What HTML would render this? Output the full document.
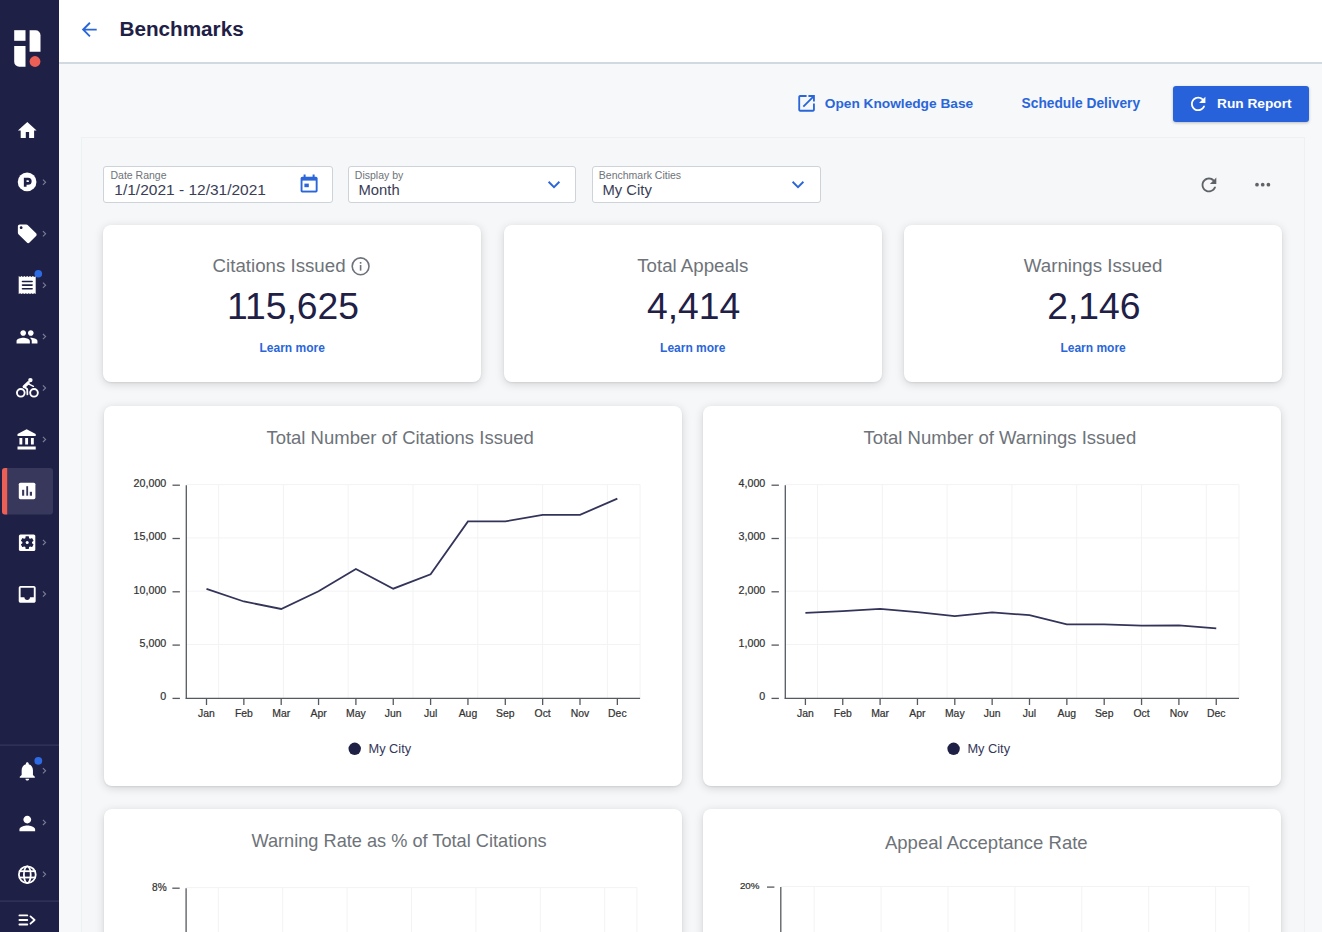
<!DOCTYPE html>
<html><head><meta charset="utf-8">
<style>
*{box-sizing:border-box;margin:0;padding:0}
html,body{width:1322px;height:932px;overflow:hidden;background:#f6f8f9;font-family:"Liberation Sans",sans-serif;position:relative}
.abs{position:absolute}
#side{position:absolute;left:0;top:0;width:58.6px;height:932px;background:#1f2046}
#hdr{position:absolute;left:59px;top:0;width:1263px;height:64px;background:#fff;border-bottom:2px solid #d3dadf}
#panel{position:absolute;left:80.6px;top:137px;width:1224px;height:800px;background:#f5f7f8;border:1px solid #eef1f3;border-bottom:none}
.t{position:absolute;white-space:nowrap;line-height:1}
.card{position:absolute;background:#fff;border-radius:8px;box-shadow:0 1px 2px rgba(0,0,0,.07),0 2px 10px rgba(0,0,0,.15)}
.inp{position:absolute;background:#fff;border:1px solid #cdd3d8;border-radius:3px}
</style></head><body>
<div id="side"></div>
<div id="hdr"></div>
<div id="panel"></div>
<svg class="abs" style="left:0;top:0" width="59" height="932" viewBox="0 0 59 932"><rect x="14.2" y="30.2" width="11.3" height="10.6" fill="#fff"/><path d="M14.2 45.9h11.3v20.9h-6.3a5 5 0 0 1-5-5z" fill="#fff"/><path d="M29.6 30.2h5.9a5 5 0 0 1 5 5v16.6h-10.9z" fill="#fff"/><circle cx="35" cy="61.5" r="5.4" fill="#ec5f57"/><rect x="2" y="468" width="51" height="46.6" rx="3" fill="#37385b"/><path d="M7.2 468v46.6h-2.2a3 3 0 0 1-3-3v-40.6a3 3 0 0 1 3-3z" fill="#ec5f57"/><rect x="0" y="744.6" width="59" height="1" fill="#3a3c60"/><rect x="0" y="900.6" width="59" height="1" fill="#3a3c60"/><path d="M27.3 122L36.6 130.6H34.1V138H29.1V132.1H25.8V138H20.7V130.6H17.9Z" fill="#fff"/><circle cx="27.1" cy="181.9" r="9.35" fill="#fff"/><path d="M25.2 186.7V179H28.1A2.2 2.2 0 0 1 28.1 183.4H25.2" fill="none" stroke="#1f2046" stroke-width="2.7"/><g transform="translate(16,222.5) scale(0.9375)" fill="#fff" ><path d="M21.41 11.58l-9-9C12.05 2.22 11.55 2 11 2H4c-1.1 0-2 .9-2 2v7c0 .55.22 1.05.59 1.42l9 9c.36.36.86.58 1.41.58.55 0 1.05-.22 1.41-.59l7-7c.37-.36.59-.86.59-1.41 0-.55-.23-1.06-.59-1.42zM5.5 7C4.67 7 4 6.33 4 5.5S4.67 4 5.5 4 7 4.67 7 5.5 6.33 7 5.5 7z"/></g><path d="M18.7 294 V276.1 L20.12 276.9 L21.53 276.1 L22.95 276.9 L24.37 276.1 L25.78 276.9 L27.20 276.1 L28.62 276.9 L30.03 276.1 L31.45 276.9 L32.87 276.1 L34.28 276.9 L35.70 276.1 V294 L34.28 293.2 L32.87 294 L31.45 293.2 L30.03 294 L28.62 293.2 L27.20 294 L25.78 293.2 L24.37 294 L22.95 293.2 L21.53 294 L20.12 293.2 L18.70 294 Z" fill="#fff"/><line x1="22.5" y1="281.5" x2="32.1" y2="281.5" stroke="#1f2046" stroke-width="1.6" stroke-linecap="round"/><line x1="22.5" y1="285.1" x2="32.1" y2="285.1" stroke="#1f2046" stroke-width="1.6" stroke-linecap="round"/><line x1="22.5" y1="288.7" x2="32.1" y2="288.7" stroke="#1f2046" stroke-width="1.6" stroke-linecap="round"/><circle cx="38.3" cy="273.7" r="3.8" fill="#2d6be4"/><g transform="translate(15.6,325.4) scale(0.9500000000000001)" fill="#fff" ><path d="M16 11c1.66 0 2.99-1.34 2.99-3S17.66 5 16 5c-1.66 0-3 1.34-3 3s1.34 3 3 3zm-8 0c1.66 0 2.99-1.34 2.99-3S9.66 5 8 5C6.34 5 5 6.34 5 8s1.34 3 3 3zm0 2c-2.33 0-7 1.17-7 3.5V19h14v-2.5c0-2.33-4.67-3.5-7-3.5zm8 0c-.29 0-.62.02-.97.05 1.16.84 1.97 1.97 1.97 3.45V19h6v-2.5c0-2.33-4.67-3.5-7-3.5z"/></g><g fill="none" stroke="#fff" stroke-width="1.9"><circle cx="20.8" cy="392.8" r="3.85"/><circle cx="34" cy="392.8" r="3.85"/></g><circle cx="30.4" cy="380.1" r="2.2" fill="#fff"/><g fill="none" stroke="#fff" stroke-linecap="round" stroke-linejoin="round"><path d="M28.2 382.8L24.2 386.6" stroke-width="3.2"/><path d="M28 383.6L33.4 386.3" stroke-width="1.5"/><path d="M24.4 386.8L27.2 389.2L27.4 394.4" stroke-width="1.8"/></g><g transform="translate(15.6,428.3) scale(0.9583333333333334)" fill="#fff" ><path d="M4 10v7h3v-7H4zm6 0v7h3v-7h-3zM2 22h19v-3H2v3zm14-12v7h3v-7h-3zm-4.5-9L2 6v2h19V6l-9.5-5z"/></g><rect x="18.8" y="482.7" width="16.6" height="16.5" rx="1.6" fill="#fff"/><rect x="22.1" y="489.8" width="2.1" height="5.9" fill="#37385b"/><rect x="26.3" y="486.2" width="1.8" height="9.5" fill="#37385b"/><rect x="29.8" y="491.8" width="2.2" height="3.9" fill="#37385b"/><rect x="18.9" y="534.5" width="16.4" height="16.6" rx="1.6" fill="#fff"/><g transform="translate(19.16,534.56) scale(0.6708333333333334)" fill="#1f2046" ><path d="M19.14 12.94c.04-.3.06-.61.06-.94 0-.32-.02-.64-.07-.94l2.03-1.58c.18-.14.23-.41.12-.61l-1.92-3.32c-.12-.22-.37-.29-.59-.22l-2.39.96c-.5-.38-1.03-.7-1.62-.94l-.36-2.54c-.04-.24-.24-.41-.48-.41h-3.84c-.24 0-.43.17-.47.41l-.36 2.54c-.59.24-1.13.57-1.62.94l-2.39-.96c-.22-.08-.47 0-.59.22L2.74 8.87c-.12.21-.08.47.12.61l2.03 1.58c-.05.3-.09.63-.09.94s.02.64.07.94l-2.03 1.58c-.18.14-.23.41-.12.61l1.92 3.32c.12.22.37.29.59.22l2.39-.96c.5.38 1.03.7 1.62.94l.36 2.54c.05.24.24.41.48.41h3.84c.24 0 .44-.17.47-.41l.36-2.54c.59-.24 1.13-.56 1.62-.94l2.39.96c.22.08.47 0 .59-.22l1.92-3.32c.12-.22.07-.47-.12-.61l-2.01-1.58z"/></g><circle cx="27.2" cy="542.6" r="1.5" fill="#fff"/><g transform="translate(15.9,583.1) scale(0.9416666666666668)" fill="#fff" ><path d="M19 3H4.99c-1.11 0-1.98.89-1.98 2L3 19c0 1.1.88 2 1.99 2H19c1.1 0 2-.9 2-2V5c0-1.11-.9-2-2-2zm0 12h-4c0 1.66-1.35 3-3 3s-3-1.34-3-3H4.99V5H19v10z"/></g><g transform="translate(16.0,759.9) scale(0.9416666666666668)" fill="#fff" ><path d="M12 22c1.1 0 2-.9 2-2h-4c0 1.1.89 2 2 2zm6-6v-5c0-3.07-1.64-5.64-4.5-6.32V4c0-.83-.67-1.5-1.5-1.5s-1.5.67-1.5 1.5v.68C7.63 5.36 6 7.92 6 11v5l-2 2v1h16v-1l-2-2z"/></g><circle cx="38.3" cy="760.8" r="3.9" fill="#2d6be4"/><g transform="translate(15.54,811.74) scale(0.9791666666666666)" fill="#fff" ><path d="M12 12c2.21 0 4-1.79 4-4s-1.79-4-4-4-4 1.79-4 4 1.79 4 4 4zm0 2c-2.67 0-8 1.34-8 4v2h16v-2c0-2.66-5.33-4-8-4z"/></g><g fill="none" stroke="#fff" stroke-width="1.8"><circle cx="27.3" cy="874.7" r="8.4"/><ellipse cx="27.3" cy="874.7" rx="3.4" ry="8.4"/><line x1="18.9" y1="871.2" x2="35.7" y2="871.2"/><line x1="18.9" y1="877.5" x2="35.7" y2="877.5"/></g><g stroke="#fff" stroke-width="1.8" stroke-linecap="round" fill="none"><path d="M19.4 915.4H27.3M19.4 920H27.3M19.4 924.5H27.3"/><path d="M30.5 916.4L34.6 920L30.5 923.7" stroke-linejoin="round"/></g><path d="M42.9 179.6l2.7 2.6-2.7 2.6" fill="none" stroke="#7c7e99" stroke-width="1.1"/><path d="M42.9 231.2l2.7 2.6-2.7 2.6" fill="none" stroke="#7c7e99" stroke-width="1.1"/><path d="M42.9 282.6l2.7 2.6-2.7 2.6" fill="none" stroke="#7c7e99" stroke-width="1.1"/><path d="M42.9 334.0l2.7 2.6-2.7 2.6" fill="none" stroke="#7c7e99" stroke-width="1.1"/><path d="M42.9 385.4l2.7 2.6-2.7 2.6" fill="none" stroke="#7c7e99" stroke-width="1.1"/><path d="M42.9 436.8l2.7 2.6-2.7 2.6" fill="none" stroke="#7c7e99" stroke-width="1.1"/><path d="M42.9 539.8l2.7 2.6-2.7 2.6" fill="none" stroke="#7c7e99" stroke-width="1.1"/><path d="M42.9 591.4l2.7 2.6-2.7 2.6" fill="none" stroke="#7c7e99" stroke-width="1.1"/><path d="M42.9 768.2l2.7 2.6-2.7 2.6" fill="none" stroke="#7c7e99" stroke-width="1.1"/><path d="M42.9 819.8l2.7 2.6-2.7 2.6" fill="none" stroke="#7c7e99" stroke-width="1.1"/><path d="M42.9 871.7l2.7 2.6-2.7 2.6" fill="none" stroke="#7c7e99" stroke-width="1.1"/></svg>
<svg class="abs" style="left:81px;top:21px" width="18" height="18" viewBox="0 0 18 18"><g transform="translate(-2.9,-2.6) scale(0.93)" fill="#2a66d9"><path d="M20 11H7.83l5.59-5.59L12 4l-8 8 8 8 1.41-1.41L7.83 13H20v-2z"/></g></svg>
<div class="t" style="left:119.50px;top:18.78px;font-size:20.7px;color:#1f2046;font-weight:700;">Benchmarks</div>
<svg class="abs" style="left:797px;top:94px" width="20" height="20" viewBox="0 0 20 20"><g transform="translate(-1.46,-1.66) scale(0.92)" fill="#2a66d9"><path d="M19 19H5V5h7V3H5c-1.11 0-2 .9-2 2v14c0 1.1.89 2 2 2h14c1.1 0 2-.9 2-2v-7h-2v7zM14 3v2h3.59l-9.83 9.83 1.41 1.41L19 6.41V10h2V3h-7z"/></g></svg>
<div class="t" style="left:824.80px;top:96.80px;font-size:13.7px;color:#2a66d9;font-weight:700;">Open Knowledge Base</div>
<div class="t" style="left:1021.60px;top:96.96px;font-size:13.75px;color:#2a66d9;font-weight:700;">Schedule Delivery</div>
<div class="abs" style="left:1173px;top:85.5px;width:136px;height:36.5px;background:#2862db;border-radius:3px;box-shadow:0 1px 3px rgba(0,0,0,.25)"></div>
<svg class="abs" style="left:1188px;top:94px" width="20" height="20" viewBox="0 0 20 20"><g transform="translate(-0.6,-0.9) scale(0.9)" fill="#fff"><path d="M17.65 6.35C16.2 4.9 14.21 4 12 4c-4.42 0-7.99 3.58-7.99 8s3.57 8 7.99 8c3.73 0 6.84-2.55 7.730-6h-2.08c-.82 2.33-3.04 4-5.65 4-3.31 0-6-2.69-6-6s2.69-6 6-6c1.66 0 3.14.69 4.22 1.78L13 11h7V4l-2.35 2.35z"/></g></svg>
<div class="t" style="left:1217.00px;top:97.00px;font-size:13.7px;color:#fff;font-weight:700;">Run Report</div>
<div class="inp" style="left:103px;top:166px;width:229.5px;height:37px"></div>
<div class="t" style="left:110.50px;top:170.21px;font-size:10.5px;color:#6e7379;">Date Range</div>
<div class="t" style="left:114.30px;top:182.48px;font-size:15.5px;color:#3a3d55;">1/1/2021 - 12/31/2021</div>
<svg class="abs" style="left:298px;top:173px" width="22" height="22" viewBox="0 0 22 22"><g fill="#2a66d9"><rect x="2.6" y="3.8" width="17" height="15.6" rx="1.6"/><rect x="4.5" y="7.6" width="13.2" height="10" fill="#fff"/><rect x="5.6" y="1.5" width="2" height="3.5"/><rect x="14.6" y="1.5" width="2" height="3.5"/><rect x="6.4" y="10.6" width="4.4" height="3.6"/></g></svg>
<div class="inp" style="left:347.5px;top:166px;width:228px;height:37px"></div>
<div class="t" style="left:354.80px;top:170.21px;font-size:10.5px;color:#6e7379;">Display by</div>
<div class="t" style="left:358.50px;top:182.97px;font-size:14.8px;color:#3a3d55;">Month</div>
<svg class="abs" style="left:546.6px;top:179.5px" width="14" height="10" viewBox="0 0 14 10"><path d="M1.6 1.8l5.4 5.3 5.4-5.3" fill="none" stroke="#2a66d9" stroke-width="1.9"/></svg>
<div class="inp" style="left:592px;top:166px;width:228.5px;height:37px"></div>
<div class="t" style="left:598.80px;top:170.21px;font-size:10.5px;color:#6e7379;">Benchmark Cities</div>
<div class="t" style="left:602.50px;top:182.97px;font-size:14.8px;color:#3a3d55;">My City</div>
<svg class="abs" style="left:790.6px;top:179.5px" width="14" height="10" viewBox="0 0 14 10"><path d="M1.6 1.8l5.4 5.3 5.4-5.3" fill="none" stroke="#2a66d9" stroke-width="1.9"/></svg>
<svg class="abs" style="left:1199px;top:175px" width="20" height="20" viewBox="0 0 20 20"><g transform="translate(-1.08,-1.08) scale(0.92)" fill="#5f6368"><path d="M17.65 6.35C16.2 4.9 14.21 4 12 4c-4.42 0-7.990 3.58-7.99 8s3.57 8 7.99 8c3.73 0 6.84-2.55 7.73-6h-2.08c-.82 2.33-3.04 4-5.65 4-3.31 0-6-2.69-6-6s2.69-6 6-6c1.66 0 3.14.69 4.22 1.78L13 11h7V4l-2.35 2.35z"/></g></svg>
<svg class="abs" style="left:1250px;top:178px" width="26" height="14" viewBox="0 0 26 14"><g fill="#5f6368"><circle cx="7" cy="6.7" r="1.85"/><circle cx="12.7" cy="6.7" r="1.85"/><circle cx="18.4" cy="6.7" r="1.85"/></g></svg>
<div class="card" style="left:103px;top:224.8px;width:378.4px;height:157.4px"></div>
<div class="t" style="left:212.60px;top:256.57px;font-size:18.7px;color:#6e7379;">Citations Issued</div>
<svg class="abs" style="left:350px;top:256px" width="21" height="21" viewBox="0 0 21 21"><circle cx="10.6" cy="10.3" r="8.4" fill="none" stroke="#6e7379" stroke-width="1.6"/><rect x="9.8" y="9" width="1.6" height="5.6" fill="#6e7379"/><rect x="9.8" y="6" width="1.6" height="1.7" fill="#6e7379"/></svg>
<div class="t" style="left:-7.00px;width:600px;text-align:center;top:288.43px;font-size:37.3px;color:#1f2046;">115,625</div>
<div class="t" style="left:-7.80px;width:600px;text-align:center;top:342.14px;font-size:12px;color:#2a66d9;font-weight:700;">Learn more</div>
<div class="card" style="left:503.6px;top:224.8px;width:378.4px;height:157.4px"></div>
<div class="t" style="left:392.80px;width:600px;text-align:center;top:256.57px;font-size:18.7px;color:#6e7379;">Total Appeals</div>
<div class="t" style="left:393.60px;width:600px;text-align:center;top:288.43px;font-size:37.3px;color:#1f2046;">4,414</div>
<div class="t" style="left:392.80px;width:600px;text-align:center;top:342.14px;font-size:12px;color:#2a66d9;font-weight:700;">Learn more</div>
<div class="card" style="left:903.9px;top:224.8px;width:378.4px;height:157.4px"></div>
<div class="t" style="left:793.10px;width:600px;text-align:center;top:256.57px;font-size:18.7px;color:#6e7379;">Warnings Issued</div>
<div class="t" style="left:793.90px;width:600px;text-align:center;top:288.43px;font-size:37.3px;color:#1f2046;">2,146</div>
<div class="t" style="left:793.10px;width:600px;text-align:center;top:342.14px;font-size:12px;color:#2a66d9;font-weight:700;">Learn more</div>
<div class="card" style="left:103.9px;top:405.7px;width:577.9px;height:380.2px"></div>
<div class="t" style="left:100.10px;width:600px;text-align:center;top:428.84px;font-size:18.5px;color:#6e7379;">Total Number of Citations Issued</div>
<svg class="abs" style="left:103.9px;top:405.7px;overflow:visible" width="578" height="381" font-family="Liberation Sans"><line x1="82.30" y1="78.60" x2="536.10" y2="78.60" stroke="#f3f3f3" stroke-width="1"/><line x1="82.30" y1="131.90" x2="536.10" y2="131.90" stroke="#f3f3f3" stroke-width="1"/><line x1="82.30" y1="185.20" x2="536.10" y2="185.20" stroke="#f3f3f3" stroke-width="1"/><line x1="82.30" y1="238.50" x2="536.10" y2="238.50" stroke="#f3f3f3" stroke-width="1"/><line x1="114.60" y1="78.60" x2="114.60" y2="292.40" stroke="#f3f3f3" stroke-width="1"/><line x1="179.40" y1="78.60" x2="179.40" y2="292.40" stroke="#f3f3f3" stroke-width="1"/><line x1="244.20" y1="78.60" x2="244.20" y2="292.40" stroke="#f3f3f3" stroke-width="1"/><line x1="309.00" y1="78.60" x2="309.00" y2="292.40" stroke="#f3f3f3" stroke-width="1"/><line x1="373.80" y1="78.60" x2="373.80" y2="292.40" stroke="#f3f3f3" stroke-width="1"/><line x1="438.60" y1="78.60" x2="438.60" y2="292.40" stroke="#f3f3f3" stroke-width="1"/><line x1="503.40" y1="78.60" x2="503.40" y2="292.40" stroke="#f3f3f3" stroke-width="1"/><line x1="536.10" y1="78.60" x2="536.10" y2="292.40" stroke="#f3f3f3" stroke-width="1"/><line x1="82.30" y1="79.20" x2="82.30" y2="293.00" stroke="#555a60" stroke-width="1.3"/><line x1="81.70" y1="292.40" x2="536.10" y2="292.40" stroke="#555a60" stroke-width="1.3"/><line x1="68.50" y1="79.20" x2="75.90" y2="79.20" stroke="#555a60" stroke-width="1.3"/><text x="62.30" y="80.90" font-size="10.7" text-anchor="end" fill="#333" stroke="#333" stroke-width="0.22">20,000</text><line x1="68.50" y1="132.50" x2="75.90" y2="132.50" stroke="#555a60" stroke-width="1.3"/><text x="62.30" y="134.20" font-size="10.7" text-anchor="end" fill="#333" stroke="#333" stroke-width="0.22">15,000</text><line x1="68.50" y1="185.80" x2="75.90" y2="185.80" stroke="#555a60" stroke-width="1.3"/><text x="62.30" y="187.50" font-size="10.7" text-anchor="end" fill="#333" stroke="#333" stroke-width="0.22">10,000</text><line x1="68.50" y1="239.10" x2="75.90" y2="239.10" stroke="#555a60" stroke-width="1.3"/><text x="62.30" y="240.80" font-size="10.7" text-anchor="end" fill="#333" stroke="#333" stroke-width="0.22">5,000</text><line x1="68.50" y1="292.40" x2="75.90" y2="292.40" stroke="#555a60" stroke-width="1.3"/><text x="62.30" y="294.10" font-size="10.7" text-anchor="end" fill="#333" stroke="#333" stroke-width="0.22">0</text><line x1="102.50" y1="292.40" x2="102.50" y2="299.00" stroke="#555a60" stroke-width="1.3"/><text x="102.50" y="311.10" font-size="10.4" text-anchor="middle" fill="#333" stroke="#333" stroke-width="0.22">Jan</text><line x1="139.85" y1="292.40" x2="139.85" y2="299.00" stroke="#555a60" stroke-width="1.3"/><text x="139.85" y="311.10" font-size="10.4" text-anchor="middle" fill="#333" stroke="#333" stroke-width="0.22">Feb</text><line x1="177.20" y1="292.40" x2="177.20" y2="299.00" stroke="#555a60" stroke-width="1.3"/><text x="177.20" y="311.10" font-size="10.4" text-anchor="middle" fill="#333" stroke="#333" stroke-width="0.22">Mar</text><line x1="214.55" y1="292.40" x2="214.55" y2="299.00" stroke="#555a60" stroke-width="1.3"/><text x="214.55" y="311.10" font-size="10.4" text-anchor="middle" fill="#333" stroke="#333" stroke-width="0.22">Apr</text><line x1="251.90" y1="292.40" x2="251.90" y2="299.00" stroke="#555a60" stroke-width="1.3"/><text x="251.90" y="311.10" font-size="10.4" text-anchor="middle" fill="#333" stroke="#333" stroke-width="0.22">May</text><line x1="289.25" y1="292.40" x2="289.25" y2="299.00" stroke="#555a60" stroke-width="1.3"/><text x="289.25" y="311.10" font-size="10.4" text-anchor="middle" fill="#333" stroke="#333" stroke-width="0.22">Jun</text><line x1="326.60" y1="292.40" x2="326.60" y2="299.00" stroke="#555a60" stroke-width="1.3"/><text x="326.60" y="311.10" font-size="10.4" text-anchor="middle" fill="#333" stroke="#333" stroke-width="0.22">Jul</text><line x1="363.95" y1="292.40" x2="363.95" y2="299.00" stroke="#555a60" stroke-width="1.3"/><text x="363.95" y="311.10" font-size="10.4" text-anchor="middle" fill="#333" stroke="#333" stroke-width="0.22">Aug</text><line x1="401.30" y1="292.40" x2="401.30" y2="299.00" stroke="#555a60" stroke-width="1.3"/><text x="401.30" y="311.10" font-size="10.4" text-anchor="middle" fill="#333" stroke="#333" stroke-width="0.22">Sep</text><line x1="438.65" y1="292.40" x2="438.65" y2="299.00" stroke="#555a60" stroke-width="1.3"/><text x="438.65" y="311.10" font-size="10.4" text-anchor="middle" fill="#333" stroke="#333" stroke-width="0.22">Oct</text><line x1="476.00" y1="292.40" x2="476.00" y2="299.00" stroke="#555a60" stroke-width="1.3"/><text x="476.00" y="311.10" font-size="10.4" text-anchor="middle" fill="#333" stroke="#333" stroke-width="0.22">Nov</text><line x1="513.35" y1="292.40" x2="513.35" y2="299.00" stroke="#555a60" stroke-width="1.3"/><text x="513.35" y="311.10" font-size="10.4" text-anchor="middle" fill="#333" stroke="#333" stroke-width="0.22">Dec</text><polyline points="102.50,182.80 139.85,195.50 177.20,203.00 214.55,185.30 251.90,163.00 289.25,182.70 326.60,168.30 363.95,115.40 401.30,115.40 438.65,108.80 476.00,108.80 513.35,92.70" fill="none" stroke="#33345a" stroke-width="1.8" stroke-linejoin="miter"/><circle cx="250.70" cy="342.80" r="6.2" fill="#1f2046"/><text x="264.50" y="347.40" font-size="12.8" fill="#35375a">My City</text></svg>
<div class="card" style="left:703px;top:405.7px;width:578.0px;height:380.2px"></div>
<div class="t" style="left:699.80px;width:600px;text-align:center;top:428.54px;font-size:18.5px;color:#6e7379;">Total Number of Warnings Issued</div>
<svg class="abs" style="left:703px;top:405.7px;overflow:visible" width="578" height="381" font-family="Liberation Sans"><line x1="82.30" y1="78.60" x2="536.00" y2="78.60" stroke="#f3f3f3" stroke-width="1"/><line x1="82.30" y1="131.90" x2="536.00" y2="131.90" stroke="#f3f3f3" stroke-width="1"/><line x1="82.30" y1="185.20" x2="536.00" y2="185.20" stroke="#f3f3f3" stroke-width="1"/><line x1="82.30" y1="238.50" x2="536.00" y2="238.50" stroke="#f3f3f3" stroke-width="1"/><line x1="114.50" y1="78.60" x2="114.50" y2="292.40" stroke="#f3f3f3" stroke-width="1"/><line x1="179.30" y1="78.60" x2="179.30" y2="292.40" stroke="#f3f3f3" stroke-width="1"/><line x1="244.10" y1="78.60" x2="244.10" y2="292.40" stroke="#f3f3f3" stroke-width="1"/><line x1="308.90" y1="78.60" x2="308.90" y2="292.40" stroke="#f3f3f3" stroke-width="1"/><line x1="373.70" y1="78.60" x2="373.70" y2="292.40" stroke="#f3f3f3" stroke-width="1"/><line x1="438.50" y1="78.60" x2="438.50" y2="292.40" stroke="#f3f3f3" stroke-width="1"/><line x1="503.30" y1="78.60" x2="503.30" y2="292.40" stroke="#f3f3f3" stroke-width="1"/><line x1="536.00" y1="78.60" x2="536.00" y2="292.40" stroke="#f3f3f3" stroke-width="1"/><line x1="82.30" y1="79.20" x2="82.30" y2="293.00" stroke="#555a60" stroke-width="1.3"/><line x1="81.70" y1="292.40" x2="536.00" y2="292.40" stroke="#555a60" stroke-width="1.3"/><line x1="68.50" y1="79.20" x2="75.90" y2="79.20" stroke="#555a60" stroke-width="1.3"/><text x="62.30" y="80.90" font-size="10.7" text-anchor="end" fill="#333" stroke="#333" stroke-width="0.22">4,000</text><line x1="68.50" y1="132.50" x2="75.90" y2="132.50" stroke="#555a60" stroke-width="1.3"/><text x="62.30" y="134.20" font-size="10.7" text-anchor="end" fill="#333" stroke="#333" stroke-width="0.22">3,000</text><line x1="68.50" y1="185.80" x2="75.90" y2="185.80" stroke="#555a60" stroke-width="1.3"/><text x="62.30" y="187.50" font-size="10.7" text-anchor="end" fill="#333" stroke="#333" stroke-width="0.22">2,000</text><line x1="68.50" y1="239.10" x2="75.90" y2="239.10" stroke="#555a60" stroke-width="1.3"/><text x="62.30" y="240.80" font-size="10.7" text-anchor="end" fill="#333" stroke="#333" stroke-width="0.22">1,000</text><line x1="68.50" y1="292.40" x2="75.90" y2="292.40" stroke="#555a60" stroke-width="1.3"/><text x="62.30" y="294.10" font-size="10.7" text-anchor="end" fill="#333" stroke="#333" stroke-width="0.22">0</text><line x1="102.40" y1="292.40" x2="102.40" y2="299.00" stroke="#555a60" stroke-width="1.3"/><text x="102.40" y="311.10" font-size="10.4" text-anchor="middle" fill="#333" stroke="#333" stroke-width="0.22">Jan</text><line x1="139.75" y1="292.40" x2="139.75" y2="299.00" stroke="#555a60" stroke-width="1.3"/><text x="139.75" y="311.10" font-size="10.4" text-anchor="middle" fill="#333" stroke="#333" stroke-width="0.22">Feb</text><line x1="177.10" y1="292.40" x2="177.10" y2="299.00" stroke="#555a60" stroke-width="1.3"/><text x="177.10" y="311.10" font-size="10.4" text-anchor="middle" fill="#333" stroke="#333" stroke-width="0.22">Mar</text><line x1="214.45" y1="292.40" x2="214.45" y2="299.00" stroke="#555a60" stroke-width="1.3"/><text x="214.45" y="311.10" font-size="10.4" text-anchor="middle" fill="#333" stroke="#333" stroke-width="0.22">Apr</text><line x1="251.80" y1="292.40" x2="251.80" y2="299.00" stroke="#555a60" stroke-width="1.3"/><text x="251.80" y="311.10" font-size="10.4" text-anchor="middle" fill="#333" stroke="#333" stroke-width="0.22">May</text><line x1="289.15" y1="292.40" x2="289.15" y2="299.00" stroke="#555a60" stroke-width="1.3"/><text x="289.15" y="311.10" font-size="10.4" text-anchor="middle" fill="#333" stroke="#333" stroke-width="0.22">Jun</text><line x1="326.50" y1="292.40" x2="326.50" y2="299.00" stroke="#555a60" stroke-width="1.3"/><text x="326.50" y="311.10" font-size="10.4" text-anchor="middle" fill="#333" stroke="#333" stroke-width="0.22">Jul</text><line x1="363.85" y1="292.40" x2="363.85" y2="299.00" stroke="#555a60" stroke-width="1.3"/><text x="363.85" y="311.10" font-size="10.4" text-anchor="middle" fill="#333" stroke="#333" stroke-width="0.22">Aug</text><line x1="401.20" y1="292.40" x2="401.20" y2="299.00" stroke="#555a60" stroke-width="1.3"/><text x="401.20" y="311.10" font-size="10.4" text-anchor="middle" fill="#333" stroke="#333" stroke-width="0.22">Sep</text><line x1="438.55" y1="292.40" x2="438.55" y2="299.00" stroke="#555a60" stroke-width="1.3"/><text x="438.55" y="311.10" font-size="10.4" text-anchor="middle" fill="#333" stroke="#333" stroke-width="0.22">Oct</text><line x1="475.90" y1="292.40" x2="475.90" y2="299.00" stroke="#555a60" stroke-width="1.3"/><text x="475.90" y="311.10" font-size="10.4" text-anchor="middle" fill="#333" stroke="#333" stroke-width="0.22">Nov</text><line x1="513.25" y1="292.40" x2="513.25" y2="299.00" stroke="#555a60" stroke-width="1.3"/><text x="513.25" y="311.10" font-size="10.4" text-anchor="middle" fill="#333" stroke="#333" stroke-width="0.22">Dec</text><polyline points="102.40,206.80 139.75,205.10 177.10,202.90 214.45,206.10 251.80,210.10 289.15,206.40 326.50,209.20 363.85,218.30 401.20,218.30 438.55,219.70 475.90,219.30 513.25,222.40" fill="none" stroke="#33345a" stroke-width="1.8" stroke-linejoin="miter"/><circle cx="250.60" cy="342.80" r="6.2" fill="#1f2046"/><text x="264.40" y="347.40" font-size="12.8" fill="#35375a">My City</text></svg>
<div class="card" style="left:103.9px;top:808.8px;width:577.9px;height:380.2px"></div>
<div class="t" style="left:99.00px;width:600px;text-align:center;top:831.79px;font-size:18.2px;color:#6e7379;">Warning Rate as % of Total Citations</div>
<svg class="abs" style="left:103.9px;top:808.8px;overflow:visible" width="578" height="381" font-family="Liberation Sans"><line x1="82.10" y1="78.60" x2="532.90" y2="78.60" stroke="#f3f3f3" stroke-width="1"/><line x1="82.10" y1="131.90" x2="532.90" y2="131.90" stroke="#f3f3f3" stroke-width="1"/><line x1="82.10" y1="185.20" x2="532.90" y2="185.20" stroke="#f3f3f3" stroke-width="1"/><line x1="82.10" y1="238.50" x2="532.90" y2="238.50" stroke="#f3f3f3" stroke-width="1"/><line x1="114.30" y1="78.60" x2="114.30" y2="291.20" stroke="#f3f3f3" stroke-width="1"/><line x1="178.70" y1="78.60" x2="178.70" y2="291.20" stroke="#f3f3f3" stroke-width="1"/><line x1="243.10" y1="78.60" x2="243.10" y2="291.20" stroke="#f3f3f3" stroke-width="1"/><line x1="307.50" y1="78.60" x2="307.50" y2="291.20" stroke="#f3f3f3" stroke-width="1"/><line x1="371.90" y1="78.60" x2="371.90" y2="291.20" stroke="#f3f3f3" stroke-width="1"/><line x1="436.30" y1="78.60" x2="436.30" y2="291.20" stroke="#f3f3f3" stroke-width="1"/><line x1="500.70" y1="78.60" x2="500.70" y2="291.20" stroke="#f3f3f3" stroke-width="1"/><line x1="532.90" y1="78.60" x2="532.90" y2="291.20" stroke="#f3f3f3" stroke-width="1"/><line x1="82.10" y1="79.20" x2="82.10" y2="291.80" stroke="#555a60" stroke-width="1.3"/><line x1="81.50" y1="291.20" x2="532.90" y2="291.20" stroke="#555a60" stroke-width="1.3"/><line x1="68.30" y1="79.20" x2="75.70" y2="79.20" stroke="#555a60" stroke-width="1.3"/><text x="62.70" y="82.10" font-size="10.1" text-anchor="end" fill="#333" stroke="#333" stroke-width="0.22">8%</text></svg>
<div class="card" style="left:703px;top:808.8px;width:578.0px;height:380.2px"></div>
<div class="t" style="left:686.30px;width:600px;text-align:center;top:833.64px;font-size:18.5px;color:#6e7379;">Appeal Acceptance Rate</div>
<svg class="abs" style="left:703px;top:808.8px;overflow:visible" width="578" height="381" font-family="Liberation Sans"><line x1="77.80" y1="77.50" x2="546.00" y2="77.50" stroke="#f3f3f3" stroke-width="1"/><line x1="77.80" y1="130.80" x2="546.00" y2="130.80" stroke="#f3f3f3" stroke-width="1"/><line x1="77.80" y1="184.10" x2="546.00" y2="184.10" stroke="#f3f3f3" stroke-width="1"/><line x1="77.80" y1="237.40" x2="546.00" y2="237.40" stroke="#f3f3f3" stroke-width="1"/><line x1="111.20" y1="77.50" x2="111.20" y2="291.20" stroke="#f3f3f3" stroke-width="1"/><line x1="178.10" y1="77.50" x2="178.10" y2="291.20" stroke="#f3f3f3" stroke-width="1"/><line x1="245.00" y1="77.50" x2="245.00" y2="291.20" stroke="#f3f3f3" stroke-width="1"/><line x1="311.90" y1="77.50" x2="311.90" y2="291.20" stroke="#f3f3f3" stroke-width="1"/><line x1="378.80" y1="77.50" x2="378.80" y2="291.20" stroke="#f3f3f3" stroke-width="1"/><line x1="445.70" y1="77.50" x2="445.70" y2="291.20" stroke="#f3f3f3" stroke-width="1"/><line x1="512.60" y1="77.50" x2="512.60" y2="291.20" stroke="#f3f3f3" stroke-width="1"/><line x1="546.00" y1="77.50" x2="546.00" y2="291.20" stroke="#f3f3f3" stroke-width="1"/><line x1="77.80" y1="78.10" x2="77.80" y2="291.80" stroke="#555a60" stroke-width="1.3"/><line x1="77.20" y1="291.20" x2="546.00" y2="291.20" stroke="#555a60" stroke-width="1.3"/><line x1="64.00" y1="78.10" x2="71.40" y2="78.10" stroke="#555a60" stroke-width="1.3"/><text x="56.50" y="80.00" font-size="9.8" text-anchor="end" fill="#333" stroke="#333" stroke-width="0.22">20%</text></svg>
</body></html>
